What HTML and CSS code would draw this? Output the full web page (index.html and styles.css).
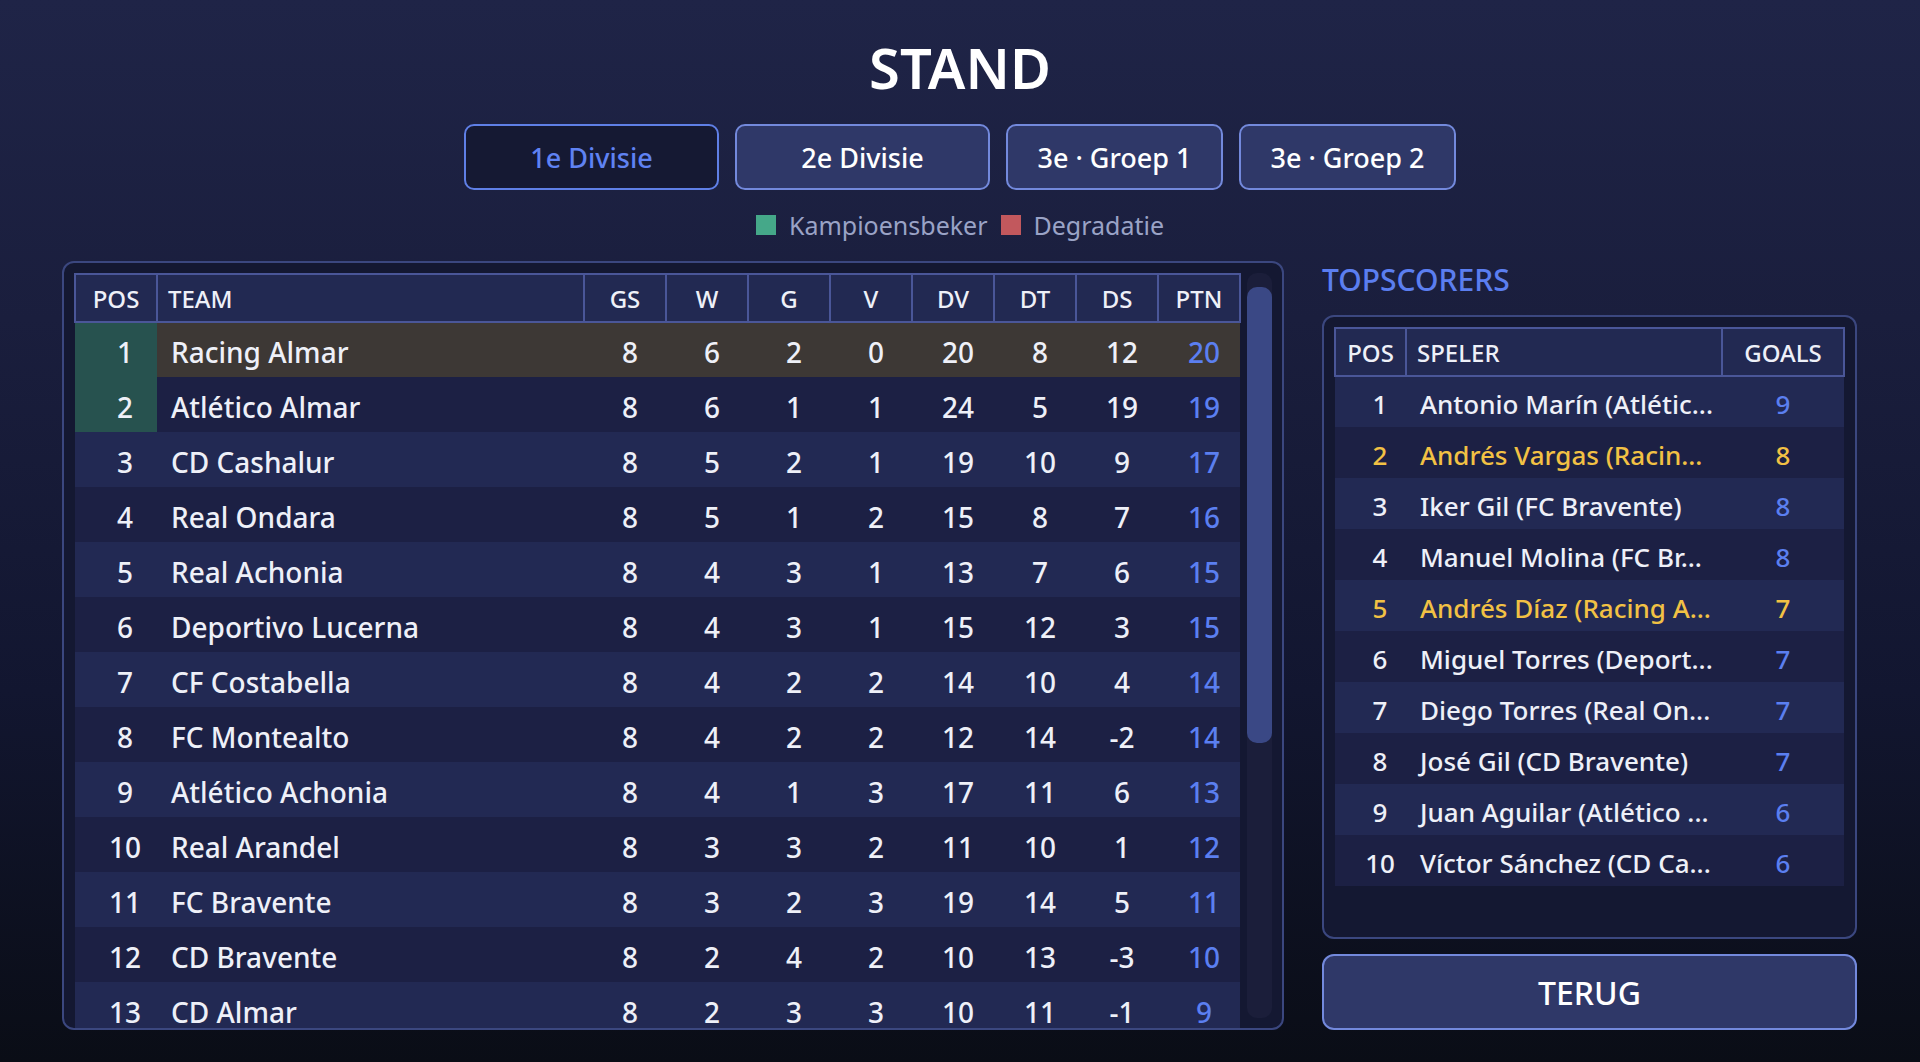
FILE: index.html
```html
<!DOCTYPE html>
<html lang="nl">
<head>
    <meta charset="UTF-8">
    <meta name="viewport" content="width=device-width, initial-scale=1.0">
    <title>Stand</title>
    <link rel="stylesheet" href="styles.css">
</head>
<body>

    <h1 class="title">STAND</h1>

    <nav class="tabs">
        <button class="tab active">1e Divisie</button>
        <button class="tab wide">2e Divisie</button>
        <button class="tab">3e · Groep 1</button>
        <button class="tab">3e · Groep 2</button>
    </nav>

    <div class="legend">
        <span class="swatch champion"></span><span>Kampioensbeker</span>
        <span class="swatch relegation"></span><span>Degradatie</span>
    </div>

    <div class="content">
        <section class="panel league">
            <div class="table-wrap">
                <table class="grid league-table">
                    <colgroup>
                        <col class="c-pos"><col><col class="c-num"><col class="c-num"><col class="c-num"><col class="c-num"><col class="c-num"><col class="c-num"><col class="c-num"><col class="c-num">
                    </colgroup>
                    <thead>
                        <tr><th>POS</th><th class="name">TEAM</th><th>GS</th><th>W</th><th>G</th><th>V</th><th>DV</th><th>DT</th><th>DS</th><th>PTN</th></tr>
                    </thead>
                    <tbody>
                        <tr class="mine"><td class="pos champ">1</td><td class="name">Racing Almar</td><td>8</td><td>6</td><td>2</td><td>0</td><td>20</td><td>8</td><td>12</td><td class="pts">20</td></tr>
                        <tr><td class="pos champ">2</td><td class="name">Atlético Almar</td><td>8</td><td>6</td><td>1</td><td>1</td><td>24</td><td>5</td><td>19</td><td class="pts">19</td></tr>
                        <tr><td class="pos">3</td><td class="name">CD Cashalur</td><td>8</td><td>5</td><td>2</td><td>1</td><td>19</td><td>10</td><td>9</td><td class="pts">17</td></tr>
                        <tr><td class="pos">4</td><td class="name">Real Ondara</td><td>8</td><td>5</td><td>1</td><td>2</td><td>15</td><td>8</td><td>7</td><td class="pts">16</td></tr>
                        <tr><td class="pos">5</td><td class="name">Real Achonia</td><td>8</td><td>4</td><td>3</td><td>1</td><td>13</td><td>7</td><td>6</td><td class="pts">15</td></tr>
                        <tr><td class="pos">6</td><td class="name">Deportivo Lucerna</td><td>8</td><td>4</td><td>3</td><td>1</td><td>15</td><td>12</td><td>3</td><td class="pts">15</td></tr>
                        <tr><td class="pos">7</td><td class="name">CF Costabella</td><td>8</td><td>4</td><td>2</td><td>2</td><td>14</td><td>10</td><td>4</td><td class="pts">14</td></tr>
                        <tr><td class="pos">8</td><td class="name">FC Montealto</td><td>8</td><td>4</td><td>2</td><td>2</td><td>12</td><td>14</td><td>-2</td><td class="pts">14</td></tr>
                        <tr><td class="pos">9</td><td class="name">Atlético Achonia</td><td>8</td><td>4</td><td>1</td><td>3</td><td>17</td><td>11</td><td>6</td><td class="pts">13</td></tr>
                        <tr><td class="pos">10</td><td class="name">Real Arandel</td><td>8</td><td>3</td><td>3</td><td>2</td><td>11</td><td>10</td><td>1</td><td class="pts">12</td></tr>
                        <tr><td class="pos">11</td><td class="name">FC Bravente</td><td>8</td><td>3</td><td>2</td><td>3</td><td>19</td><td>14</td><td>5</td><td class="pts">11</td></tr>
                        <tr><td class="pos">12</td><td class="name">CD Bravente</td><td>8</td><td>2</td><td>4</td><td>2</td><td>10</td><td>13</td><td>-3</td><td class="pts">10</td></tr>
                        <tr><td class="pos">13</td><td class="name">CD Almar</td><td>8</td><td>2</td><td>3</td><td>3</td><td>10</td><td>11</td><td>-1</td><td class="pts">9</td></tr>
                    </tbody>
                </table>
            </div>
            <div class="scrollbar"><div class="thumb"></div></div>
        </section>

        <aside class="side">
            <h2 class="side-title">TOPSCORERS</h2>
            <div class="panel scorers">
                <table class="grid scorer-table">
                    <colgroup><col class="s-pos"><col><col class="s-goals"></colgroup>
                    <thead>
                        <tr><th>POS</th><th class="name">SPELER</th><th>GOALS</th></tr>
                    </thead>
                    <tbody>
                        <tr><td class="pos">1</td><td class="name">Antonio Marín (Atlétic...</td><td class="pts">9</td></tr>
                        <tr class="mine"><td class="pos">2</td><td class="name">Andrés Vargas (Racin...</td><td class="pts">8</td></tr>
                        <tr><td class="pos">3</td><td class="name">Iker Gil (FC Bravente)</td><td class="pts">8</td></tr>
                        <tr><td class="pos">4</td><td class="name">Manuel Molina (FC Br...</td><td class="pts">8</td></tr>
                        <tr class="mine"><td class="pos">5</td><td class="name">Andrés Díaz (Racing A...</td><td class="pts">7</td></tr>
                        <tr><td class="pos">6</td><td class="name">Miguel Torres (Deport...</td><td class="pts">7</td></tr>
                        <tr><td class="pos">7</td><td class="name">Diego Torres (Real On...</td><td class="pts">7</td></tr>
                        <tr><td class="pos">8</td><td class="name">José Gil (CD Bravente)</td><td class="pts">7</td></tr>
                        <tr><td class="pos">9</td><td class="name">Juan Aguilar (Atlético ...</td><td class="pts">6</td></tr>
                        <tr><td class="pos">10</td><td class="name">Víctor Sánchez (CD Ca...</td><td class="pts">6</td></tr>
                    </tbody>
                </table>
            </div>
            <button class="back">TERUG</button>
        </aside>
    </div>

</body>
</html>
```

FILE: styles.css
```css
* { margin: 0; padding: 0; box-sizing: border-box; }

body {
    height: 100vh;
    display: flex;
    flex-direction: column;
    align-items: center;
    padding: 32px 62px 32px;
    font-family: "Noto Sans", "Open Sans", sans-serif;
    color: #eef0f8;
    background: linear-gradient(180deg, #1f2447 0%, #1a1e3d 30%, #121630 65%, #0a0d16 100%);
    overflow: hidden;
}

.title {
    font-size: 56px;
    font-weight: 600;
    line-height: 70px;
    color: #ffffff;
}

/* division tabs */
.tabs {
    display: flex;
    gap: 16px;
    margin-top: 22px;
}
.tab {
    width: 217px;
    height: 66px;
    font-family: inherit;
    font-size: 27px;
    font-weight: 500;
    color: #ffffff;
    background: #2f3868;
    border: 2px solid #7389dc;
    border-radius: 10px;
    cursor: pointer;
}
.tab.wide, .tab.active { width: 255px; }
.tab.active {
    color: #5f82f2;
    background: #151933;
    border-color: #5f7fe6;
}

.legend {
    display: flex;
    align-items: center;
    margin-top: 21px;
    font-size: 25px;
    line-height: 28px;
    color: #9aa3c6;
}
.swatch {
    width: 20px;
    height: 20px;
    margin-right: 13px;
}
.swatch.relegation { margin-left: 13px; background: #c2585d; }
.swatch.champion { background: #45a889; }

.content {
    flex: 1;
    min-height: 0;
    width: 100%;
    display: grid;
    grid-template-columns: 1222px 535px;
    gap: 38px;
    margin-top: 22px;
}

.panel {
    background: #141832;
    border: 2px solid #3b477f;
    border-radius: 12px;
}

/* standings */
.league {
    display: flex;
    padding: 10px 10px 0 10px;
    min-height: 0;
    overflow: hidden;
}
.table-wrap {
    flex: 1;
    overflow: hidden;
}
.scrollbar {
    width: 25px;
    margin: 0 0 10px 6px;
    padding-top: 14px;
    background: #1b1e3a;
    border-radius: 10px;
}
.thumb {
    height: 456px;
    background: #3a4885;
    border-radius: 10px;
}

.grid {
    width: 100%;
    border-collapse: collapse;
    table-layout: fixed;
}
.grid th {
    height: 48px;
    font-size: 24px;
    font-weight: 500;
    text-align: center;
    background: #222952;
    border: 2px solid #4a5698;
}
.grid th.name { text-align: left; padding-left: 10px; }
.grid td {
    font-size: 26px;
    font-weight: 500;
    text-align: center;
    padding-top: 4px;
}
.grid td.name { text-align: left; padding-left: 14px; white-space: nowrap; overflow: hidden; }
.grid td.pos { padding-left: 16px; }
.grid td.pts { color: #5b7ff0; }
.grid tbody tr:nth-child(odd) { background: #222953; }
.grid tbody tr:nth-child(even) { background: #1c2044; }

.league-table .c-pos { width: 82px; }
.league-table .c-num { width: 82px; }
.league-table td { height: 55px; font-size: 28px; padding-left: 10px; }
.league-table td.pos { padding-left: 18px; }
.league-table td.name { padding-left: 14px; }
.league-table tr.mine { background: #3d3835 !important; }
.league-table td.champ { background: #27524f; }

/* right column */
.side {
    display: flex;
    flex-direction: column;
    min-height: 0;
}
.side-title {
    font-size: 30px;
    font-weight: 500;
    line-height: 34px;
    padding-top: 2px;
    margin-bottom: 18px;
    color: #5b7ef0;
}
.scorers {
    flex: 1;
    padding: 10px;
}
.scorer-table .s-pos { width: 71px; }
.scorer-table .s-goals { width: 122px; }
.scorer-table td { height: 51px; }
.scorer-table td.pos { padding-left: 19px; }
.scorer-table tr.mine td { color: #f2c144; }

.back {
    height: 76px;
    margin-top: 15px;
    font-family: inherit;
    font-size: 32px;
    font-weight: 500;
    color: #ffffff;
    background: #2f3868;
    border: 2px solid #7389dc;
    border-radius: 12px;
    cursor: pointer;
}
```
